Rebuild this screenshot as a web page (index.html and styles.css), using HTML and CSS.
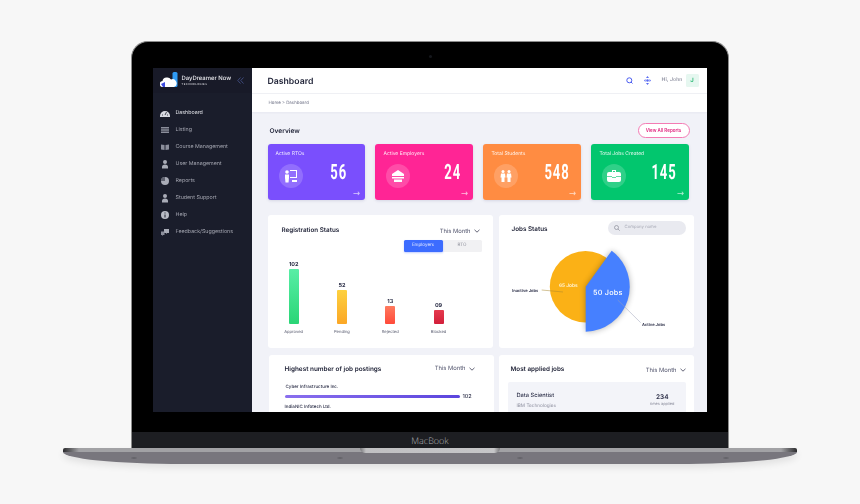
FILE: index.html
```html
<!DOCTYPE html>
<html lang="en">
<head>
<meta charset="utf-8">
<title>DayDreamer Dashboard</title>
<link rel="stylesheet" href="styles.css">
</head>
<body>
<div class="laptop">
  <div class="lid">
    <div class="bezel">
      <i class="camera"></i>
      <div class="screen">
        <aside class="sidebar">
          <div class="brand">
            <svg class="logo" width="19" height="16" viewBox="0 0 19 16"><rect x="12.500" y="0" width="5" height="15" rx="1.500" fill="#2f9bf5"/><path d="M3 15a3 3 0 0 1-.5-6 4 4 0 0 1 4-3.500 4.500 4.500 0 0 1 4.500 2 3.500 3.500 0 0 1 3 7.500z" fill="#fff"/><path d="M1 12l4-2v5H3z" fill="#3c4be0"/></svg>
            <div class="brand-text"><b>DayDreamer Now</b><small>TECHNOLOGIES</small></div>
            <svg class="collapse" width="7" height="7" viewBox="0 0 7 7" fill="none" stroke="#46558f" stroke-width=".8"><path d="M3.500 .5L.8 3.500l2.700 3M6.500 .5L3.800 3.500l2.700 3"/></svg>
          </div>
          <nav class="nav">
            <a class="nav-item active"><svg viewBox="0 0 10 10"><path d="M0 8a5 5 0 0 1 10 0v1H0z" fill="#d8dae2"/><path d="M5 7l1.500-3M2 7h1M7 7h1" stroke="#1a1d2a" stroke-width=".8"/></svg>Dashboard</a>
            <a class="nav-item"><svg viewBox="0 0 10 10"><path d="M1 2h8v1.500H1zM1 4.300h8v1.500H1zM1 6.600h8v1.500H1z" fill="#8b8e9b"/></svg>Listing</a>
            <a class="nav-item"><svg viewBox="0 0 10 10"><path d="M1 2.500l3.500.5v5L1 7.500zM9 2.500L5.500 3v5L9 7.500z" fill="#8b8e9b"/></svg>Course Management</a>
            <a class="nav-item"><svg viewBox="0 0 10 10"><circle cx="5" cy="3" r="2" fill="#a9acb7"/><path d="M2 9.500V8a3 2.500 0 0 1 6 0v1.500z" fill="#a9acb7"/></svg>User Management</a>
            <a class="nav-item"><svg viewBox="0 0 10 10"><circle cx="5" cy="5" r="4" fill="#a9acb7"/><path d="M5 5V1a4 4 0 0 0-4 4z" fill="#5e616e"/></svg>Reports</a>
            <a class="nav-item"><svg viewBox="0 0 10 10"><circle cx="5" cy="3" r="2" fill="#a9acb7"/><path d="M2 9.500V8a3 2.500 0 0 1 6 0v1.500z" fill="#a9acb7"/></svg>Student Support</a>
            <a class="nav-item"><svg viewBox="0 0 10 10"><circle cx="5" cy="5" r="4" fill="#b9bcc6"/><path d="M5 4.500v3M5 2.500v1" stroke="#1a1d2a"/></svg>Help</a>
            <a class="nav-item"><svg viewBox="0 0 10 10"><path d="M4 2h5v4H7L6 7V6H4z" fill="#a9acb7"/><path d="M1 4.500h3.500V8H3L2 9V8H1z" fill="#8b8e9b"/></svg>Feedback/Suggestions</a>
          </nav>
        </aside>
        <main class="main">
          <header class="topbar">
            <h1>Dashboard</h1>
            <div class="top-actions">
              <svg class="top-icon" width="7" height="7" viewBox="0 0 7 7" fill="none" stroke="#4a5cf0" stroke-width="1"><circle cx="3.300" cy="3.300" r="2.500"/><path d="M5 5l1.500 1.500"/></svg>
              <svg class="top-icon second" width="7" height="9" viewBox="0 0 7 9"><path d="M3.500 0l1.500 2H2zM3.500 9l-1.500-2h3zM0 4.500l1.500-1.500v3zM7 4.500L5.500 3v3z" fill="#5b6df2"/><circle cx="3.500" cy="4.500" r="1.300" fill="#5b6df2"/></svg>
              <span class="hello">Hi, John</span>
              <span class="avatar">J</span>
            </div>
          </header>
          <div class="crumbs">Home &gt; Dashboard</div>
          <div class="content">
            <div class="overview-head">
              <h2>Overview</h2>
              <button class="view-all">View All Reports</button>
            </div>
            <div class="cards">
              <div class="card purple">
                <div class="card-title">Active RTOs</div>
                <div class="card-body">
                  <span class="card-icon"><svg width="14" height="14" viewBox="0 0 14 14" fill="#fff"><circle cx="3" cy="3" r="1.800"/><path d="M1 5.500h4V9l-.5 4.500h-3L1 9z"/><path d="M6 1h7v8H6V8h6V2H6z"/><path d="M8 11h5v2H8z"/></svg></span>
                  <span class="card-num first-num">56</span>
                </div>
                <div class="card-arrow">→</div>
              </div>
              <div class="card pink">
                <div class="card-title">Active Employers</div>
                <div class="card-body">
                  <span class="card-icon"><svg width="14" height="14" viewBox="0 0 14 14" fill="#fff"><path d="M7 1L13 5v2H1V5z"/><path d="M1 8h12v1.500H1zM3 10.500h8V13H3z"/></svg></span>
                  <span class="card-num">24</span>
                </div>
                <div class="card-arrow">→</div>
              </div>
              <div class="card orange">
                <div class="card-title">Total Students</div>
                <div class="card-body">
                  <span class="card-icon"><svg width="14" height="14" viewBox="0 0 14 14" fill="#fff"><circle cx="4" cy="2.500" r="1.500"/><circle cx="10" cy="2.500" r="1.500"/><path d="M2 4.500h4l.5 4H5.500V13h-3V8.500h-1zM8 4.500h4l.5 4h-1V13h-3V8.500h-1z"/></svg></span>
                  <span class="card-num">548</span>
                </div>
                <div class="card-arrow">→</div>
              </div>
              <div class="card green">
                <div class="card-title">Total Jobs Created</div>
                <div class="card-body">
                  <span class="card-icon"><svg width="14" height="12" viewBox="0 0 14 12" fill="#fff"><path d="M5 0h4v2h3a2 2 0 0 1 2 2v6a2 2 0 0 1-2 2H2a2 2 0 0 1-2-2V4a2 2 0 0 1 2-2h3zm1 1v1h2V1z"/><path d="M0 6h5v1h4V6h5v.8H9v1H5v-1H0z" fill="#35cf88"/></svg></span>
                  <span class="card-num">145</span>
                </div>
                <div class="card-arrow">→</div>
              </div>
            </div>
            <div class="panel-row first">
              <section class="panel reg">
                <div class="panel-head">
                  <h3>Registration Status</h3>
                  <span class="month">This Month <svg width="6" height="4" viewBox="0 0 6 4" fill="none" stroke="#3c3f55" stroke-width=".8"><path d="M.5 .8L3 3.200 5.500 .8"/></svg></span>
                </div>
                <div class="tabs"><span class="tab on">Employers</span><span class="tab">RTO</span></div>
                <div class="bars">
                  <div class="bar-col"><b>102</b><i class="bar b-green"></i><span>Approved</span></div>
                  <div class="bar-col"><b>52</b><i class="bar b-yellow"></i><span>Pending</span></div>
                  <div class="bar-col"><b>13</b><i class="bar b-red"></i><span>Rejected</span></div>
                  <div class="bar-col"><b>09</b><i class="bar b-crimson"></i><span>Blocked</span></div>
                </div>
              </section>
              <section class="panel jobs">
                <div class="panel-head jobs-head">
                  <h3>Jobs Status</h3>
                  <span class="search"><svg width="6" height="6" viewBox="0 0 6 6" fill="none" stroke="#8b8d99" stroke-width=".7"><circle cx="2.500" cy="2.500" r="2"/><path d="M4 4l1.700 1.700"/></svg>Company name</span>
                </div>
                <svg class="pie" width="195" height="105" viewBox="0 0 195 105">
                  <defs>
                    <filter id="sh" x="-30%" y="-30%" width="160%" height="160%"><feGaussianBlur stdDeviation="3"/></filter>
                  </defs>
                  <circle cx="86.500" cy="42.700" r="35.700" fill="#fbb116"/>
                  <path d="M86.700 42.700L112.700 6.700A45 45 0 0 1 86.700 87.700Z" fill="#000" opacity=".3" filter="url(#sh)"/>
                  <path d="M86.700 42.700L112.700 6.700A45 45 0 0 1 86.700 87.700Z" fill="#4680ff"/>
                  <path d="M42.700 46L64 48" stroke="#a8872f" stroke-width=".5" fill="none"/>
                  <path d="M118.700 56L141.700 78.700" stroke="#9aa0b8" stroke-width=".5" fill="none"/>
                  <text class="pie-small" x="60" y="43">65 Jobs</text>
                  <text class="pie-big" x="94" y="51">50 Jobs</text>
                  <text class="pie-label" x="13" y="47.500">Inactive Jobs</text>
                  <text class="pie-label" x="143" y="81.500">Active Jobs</text>
                </svg>
              </section>
            </div>
            <div class="panel-row second">
              <section class="panel high">
                <div class="panel-head">
                  <h3>Highest number of job postings</h3>
                  <span class="month">This Month <svg width="6" height="4" viewBox="0 0 6 4" fill="none" stroke="#3c3f55" stroke-width=".8"><path d="M.5 .8L3 3.200 5.500 .8"/></svg></span>
                </div>
                <div class="post-name">Cyber Infrastructure Inc.</div>
                <div class="post-row"><i class="post-bar"></i><b>102</b></div>
                <div class="post-name next">IndiaNIC Infotech Ltd.</div>
              </section>
              <section class="panel applied">
                <div class="panel-head">
                  <h3>Most applied jobs</h3>
                  <span class="month">This Month <svg width="6" height="4" viewBox="0 0 6 4" fill="none" stroke="#3c3f55" stroke-width=".8"><path d="M.5 .8L3 3.200 5.500 .8"/></svg></span>
                </div>
                <div class="job-card">
                  <div><div class="job-title">Data Scientist</div><div class="job-co">IBM Technologies</div></div>
                  <div class="job-count"><b>234</b><span>times applied</span></div>
                </div>
              </section>
            </div>
          </div>
        </main>
      </div>
    </div>
    <div class="chin">MacBook</div>
  </div>
  <div class="base"><i class="notch"></i></div>
</div>
</body>
</html>
```
FILE: styles.css
```css
* { box-sizing: border-box; }
html, body { margin: 0; height: 100%; }
body { background: #f7f7f7; font-family: Inter, "Liberation Sans", sans-serif; overflow: hidden; text-rendering: geometricPrecision; }
h1, h2, h3 { margin: 0; }
.laptop { height: 504px; padding-top: 41px; display: flex; flex-direction: column; align-items: center; }
.lid { width: 598px; height: 407px; background: #000; border: solid #8c8c8c; border-width: 1.500px 1.500px 0; border-radius: 17px 17px 0 0; overflow: hidden; display: flex; flex-direction: column; }
.bezel { position: relative; flex: 1; padding: 25.500px 20.500px 0; }
.camera { position: absolute; left: 297px; top: 13px; width: 3px; height: 3px; border-radius: 50%; background: #15171c; }
.screen { width: 554px; height: 344px; display: flex; overflow: hidden; background: #f1f2f8; filter: blur(.3px); }
.chin { height: 16.500px; background: #1d1e22; color: #b5b5b8; font: 300 9px/17px "Open Sans", sans-serif; text-align: center; }
.base { position: relative; width: 734px; height: 16px; border-radius: 2px 2px 120px 120px / 2px 2px 12px 12px; box-shadow: 0 4px 7px rgba(0,0,0,.09);
  background:
    radial-gradient(ellipse 4px 1px, #5e5d63 30%, transparent) 67px 9px / 8px 2px no-repeat,
    radial-gradient(ellipse 4px 1px, #5e5d63 30%, transparent) 273px 9px / 8px 2px no-repeat,
    radial-gradient(ellipse 4px 1px, #5e5d63 30%, transparent) 453px 9px / 8px 2px no-repeat,
    radial-gradient(ellipse 4px 1px, #5e5d63 30%, transparent) 659px 9px / 8px 2px no-repeat,
    linear-gradient(90deg, #2a2a2d, #a2a2a5 16px, #a2a2a5 718px, #2a2a2d) 0 0 / 100% 4px no-repeat,
    #78767d; }
.notch { display: block; width: 140px; height: 5px; margin: 0 auto; background: linear-gradient(90deg, #77777a, #c0c0c2 6px, #c6c6c8 134px, #77777a); border-radius: 0 0 5px 5px; }

.sidebar { width: 99px; flex: none; background: #1a1d2b; color: #a5a7b2; }
.brand { height: 25px; padding: 0 0 0 7px; display: flex; align-items: center; gap: 3px; background: #181a28; }
.logo { flex: none; }
.brand-text { color: #e9e9ee; display: flex; flex-direction: column; white-space: nowrap; padding-top: 1px; }
.brand-text b { font-size: 5.900px; font-weight: 500; line-height: 7px; }
.brand-text small { font-size: 2.700px; letter-spacing: .4px; line-height: 4px; }
.collapse { margin-left: 3px; flex: none; }
.nav { display: flex; flex-direction: column; padding-top: 12.500px; }
.nav-item { height: 16.900px; display: flex; align-items: center; gap: 6px; padding-left: 7px; font-size: 5.300px; white-space: nowrap; }
.nav-item svg { width: 10px; height: 10px; flex: none; }
.nav-item.active { color: #e3e4ea; }

.main { flex: 1; min-width: 0; display: flex; flex-direction: column; }
.topbar { height: 26px; flex: none; background: #fff; border-bottom: 1px solid #eff0f4; display: flex; align-items: center; justify-content: space-between; padding: 0 8px 0 16px; }
.topbar h1 { font-size: 8.700px; font-weight: 600; color: #23263a; padding-top: 4px; }
.top-actions { display: flex; align-items: center; }
.top-icon.second { margin-left: 11px; }
.hello { font-size: 5.200px; color: #6d7085; margin-left: 10px; letter-spacing: .1px; }
.avatar { width: 13px; height: 13px; margin-left: 3px; border-radius: 1.500px; background: #e6f7f0; color: #27b873; font-size: 6px; font-weight: 600; display: flex; align-items: center; justify-content: center; }
.crumbs { height: 18px; flex: none; background: #fff; font-size: 4.400px; color: #73768a; padding: 7.500px 0 0 17px; box-shadow: 0 1px 2px rgba(30,40,90,.05); }

.content { flex: 1; min-height: 0; padding: 11px 0 0 16px; }
.overview-head { height: 15px; width: 422px; display: flex; align-items: center; justify-content: space-between; padding-left: 2px; }
.overview-head h2 { font-size: 6.600px; font-weight: 600; color: #23263a; padding-top: 2px; }
.view-all { width: 52px; height: 15px; padding: 0; background: #fff; border: .7px solid #f47bb4; border-radius: 8px; color: #e0257f; font: 600 4.500px Inter, sans-serif; }
.cards { display: flex; gap: 10.300px; margin-top: 6px; }
.card { width: 97.700px; height: 56px; border-radius: 3px; color: #fff; padding: 7px 8px 0; box-shadow: 0 1px 3px rgba(60,60,120,.15); display: flex; flex-direction: column; }
.purple { background: #7a4ffd; }
.pink { background: #ff2595; }
.orange { background: #ff8c42; }
.green { background: #02c66e; }
.card-title { font-size: 5px; line-height: 7px; white-space: nowrap; color: rgba(255,255,255,.9); }
.card-body { display: flex; align-items: center; justify-content: space-between; margin-top: 5px; padding: 0 4px 0 3px; }
.card-icon { width: 24px; height: 24px; border-radius: 50%; background: rgba(255,255,255,.18); display: flex; align-items: center; justify-content: center; }
.card-num { font: 700 21px/1 Roboto, sans-serif; transform: scaleX(.62); transform-origin: right center; letter-spacing: 1.500px; margin-bottom: 6px; }
.first-num { margin-right: 6px; }
.card-arrow { text-align: right; font: 8.500px/8px "DejaVu Sans", sans-serif; color: rgba(255,255,255,.7); margin: 0 -3px 0 0; }

.panel-row { display: flex; }
.panel-row.first { margin-top: 15px; gap: 6px; }
.panel-row.second { margin: 7px 0 0 1px; gap: 5px; }
.panel { background: #fff; border-radius: 3px; flex: none; }
.reg, .high { width: 225px; }
.jobs, .applied { width: 195px; }
.reg, .jobs { height: 133px; }
.high, .applied { height: 60px; }
.panel-head { display: flex; justify-content: space-between; align-items: center; }
.panel h3 { font-size: 6.300px; font-weight: 600; color: #23263a; white-space: nowrap; }
.month { font-size: 5.800px; color: #4c4f68; white-space: nowrap; display: flex; align-items: center; gap: 3px; }

.reg { padding: 10px 11px 0 14px; }
.reg .panel-head { padding-top: 1px; }
.reg .month { margin: 2px 2px 0 0; }
.tabs { width: 78px; height: 12.500px; margin: 5px 0 0 auto; display: flex; background: #f1f1f3; border-radius: 1.500px; }
.tab { flex: 1; font-size: 4.500px; color: #8b8d99; display: flex; align-items: center; justify-content: center; }
.tab.on { flex: none; width: 39px; background: #3c6cff; color: #dfe6ff; border-radius: 1.500px; box-shadow: 0 1px 2px rgba(50,90,255,.3); }
.bars { display: flex; margin: 6.500px 0 0 -12px; height: 79px; }
.bar-col { width: 48.300px; display: flex; flex-direction: column; align-items: center; justify-content: flex-end; }
.bar-col b { font-size: 5.500px; font-weight: 700; color: #2c2f48; line-height: 8px; }
.bar { display: block; width: 10px; border-radius: 1px; }
.bar-col span { font-size: 4.100px; color: #5f6275; height: 14px; padding-top: 5px; line-height: 6px; }
.b-green { height: 55px; background: linear-gradient(#58eea6, #2ad576); }
.b-yellow { height: 34px; background: linear-gradient(#fdd13f, #fba726); }
.b-red { height: 18px; background: linear-gradient(#ff7a5e, #ff4a3a); }
.b-crimson { height: 14px; background: linear-gradient(#e53a4e, #d21f3a); }

.jobs-head { padding: 6px 8px 0 13px; }
.jobs-head h3 { padding-top: 2px; }
.search { width: 78px; height: 14px; border-radius: 7px; background: #e9eaf0; font-size: 4.300px; color: #a8aab6; display: flex; align-items: center; gap: 5px; padding-left: 6px; }
.pie { display: block; margin-top: 9px; }
.pie-small { font: 600 4.800px Inter, sans-serif; fill: #fff4d8; }
.pie-big { font: 500 7.300px Inter, sans-serif; fill: #fff; letter-spacing: .2px; }
.pie-label { font: 600 4.100px Inter, sans-serif; fill: #2c2f48; }

.high { padding: 10px 19px 0 16px; }
.high h3 { font-size: 6.400px; }
.post-name { font-size: 4.500px; font-weight: 500; color: #2c2f48; margin-top: 12px; line-height: 6px; padding-left: 1px; }
.post-name.next { margin-top: 5px; padding-left: 0; }
.post-row { display: flex; align-items: center; gap: 3px; margin-top: 3px; height: 6px; }
.post-bar { display: block; width: 175px; height: 3.500px; border-radius: 2px; background: linear-gradient(90deg, #8a6fee, #5b45dd); }
.post-row b { font-size: 5.500px; font-weight: 500; color: #2c2f48; }
.applied { padding: 10px 8px 0 12px; }
.applied .month { margin-top: 2px; }
.job-card { margin: 8px 0 0 -3px; height: 40px; background: #f3f4f9; border-radius: 2px; display: flex; justify-content: space-between; padding: 10px 11px 0 9px; }
.job-title { font-size: 5.700px; font-weight: 500; color: #2c2f48; line-height: 8px; }
.job-co { font-size: 4.700px; color: #8f91a0; margin-top: 3px; line-height: 6px; }
.job-count { display: flex; flex-direction: column; align-items: center; }
.job-count b { font-size: 6.500px; font-weight: 600; color: #2c2f48; line-height: 8px; margin-top: 1px; }
.job-count span { font-size: 3.900px; color: #8f91a0; line-height: 6px; }
```
